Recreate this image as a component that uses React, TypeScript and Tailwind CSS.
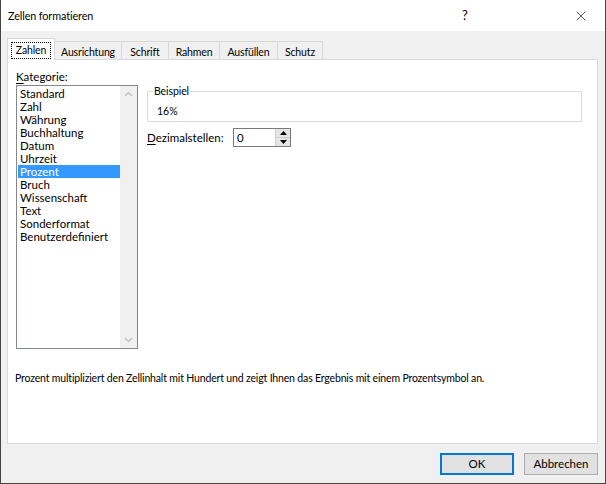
import React from 'react';
import { X } from 'lucide-react';

const categories = [
  'Standard',
  'Zahl',
  'Währung',
  'Buchhaltung',
  'Datum',
  'Uhrzeit',
  'Prozent',
  'Bruch',
  'Wissenschaft',
  'Text',
  'Sonderformat',
  'Benutzerdefiniert',
];

const tabs = [
  { label: 'Zahlen', w: 'w-[48px]' },
  { label: 'Ausrichtung', w: 'w-[67px]' },
  { label: 'Schrift', w: 'w-[47px]' },
  { label: 'Rahmen', w: 'w-[51px]' },
  { label: 'Ausfüllen', w: 'w-[58px]' },
  { label: 'Schutz', w: 'w-[45px]' },
];

const App: React.FC = () => {
  const selected = 'Prozent';

  return (
    <div className="w-[606px] h-[484px] flex flex-col border-x border-b border-[#454545] bg-[#f0f0f0] text-[11.5px] text-black font-['Lato','Liberation_Sans',sans-serif] overflow-hidden">
      {/* Title bar */}
      <div className="h-[31px] bg-white flex items-center shrink-0">
        <span className="pl-[7px] flex-1 leading-[16px] text-[10.8px] tracking-[-0.1px]">Zellen formatieren</span>
        <span className="w-[46px] text-center text-[13px]">?</span>
        <span className="w-[46px] flex justify-center ml-[70px] mr-[1px]">
          <X size={16} strokeWidth={1} />
        </span>
      </div>

      {/* Body */}
      <div className="flex-1 flex flex-col px-[6px] pt-[7px]">
        {/* Tabs */}
        <div className="flex items-end h-[22px] -mb-px relative z-10 text-[10.5px] tracking-[-0.15px]">
          {tabs.map((t, i) =>
            i === 0 ? (
              <div
                key={t.label}
                className={`${t.w} h-[22px] bg-white border-x border-t border-[#d9d9d9] flex justify-center pt-[3px]`}
              >
                <span className="h-[17px] px-[4px] border border-dotted border-black leading-[15px]">{t.label}</span>
              </div>
            ) : (
              <div
                key={t.label}
                className={`${t.w} h-[19px] border-t border-r border-[#d9d9d9] flex items-center justify-center leading-[16px] pt-[2px]`}
              >
                {t.label}
              </div>
            )
          )}
        </div>

        {/* Panel */}
        <div className="w-[591px] h-[385px] bg-white border border-[#d9d9d9] px-[8px] pt-[8px]">
          <div className="flex">
            <div className="w-[122px] shrink-0">
              <div className="h-[17px] leading-[17px]">
                <span className="underline underline-offset-2">K</span>ategorie:
              </div>
              <div className="h-[264px] border border-[#828790] flex">
                <div className="flex-1 pt-[1px] pl-[1px]">
                  {categories.map((c) => (
                    <div
                      key={c}
                      className={`h-[13px] leading-[13px] pl-[2px] whitespace-nowrap ${
                        c === selected ? 'bg-[#3399ff] text-white' : ''
                      }`}
                    >
                      {c}
                    </div>
                  ))}
                </div>
                <div className="w-[17px] bg-[#f0f0f0] flex flex-col justify-between items-center py-[5px]">
                  <svg width="9" height="6" viewBox="0 0 9 6">
                    <path d="M1 5 L4.5 1.5 L8 5" fill="none" stroke="#c2c2c2" strokeWidth="1.5" />
                  </svg>
                  <svg width="9" height="6" viewBox="0 0 9 6">
                    <path d="M1 1 L4.5 4.5 L8 1" fill="none" stroke="#c2c2c2" strokeWidth="1.5" />
                  </svg>
                </div>
              </div>
            </div>

            <div className="flex-1 ml-[9px] pt-[15px] pr-[7px]">
              <fieldset className="border border-[#dcdcdc] pl-[5px] pb-[2px]">
                <legend className="px-[1px] leading-[16px] text-[10.5px] tracking-[-0.1px]">Beispiel</legend>
                <div className="h-[16px] leading-[16px] mt-[4px] pl-[4px] text-[10.5px]">16%</div>
              </fieldset>
              <div className="flex items-center h-[19px] mt-[6px]">
                <span className="w-[86px]">
                  <span className="underline underline-offset-2">D</span>ezimalstellen:
                </span>
                <div className="w-[58px] h-[19px] border border-[#7a7a7a] flex">
                  <span className="flex-1 pl-[3px] leading-[17px]">0</span>
                  <div className="w-[15px] flex flex-col border-l border-[#cfcfcf]">
                    <div className="flex-1 bg-[#e5e5e5] border-b border-[#cfcfcf] flex items-center justify-center">
                      <svg width="7" height="4" viewBox="0 0 7 4">
                        <path d="M0 4 L3.5 0 L7 4 Z" fill="#000" />
                      </svg>
                    </div>
                    <div className="flex-1 bg-[#e5e5e5] flex items-center justify-center">
                      <svg width="7" height="4" viewBox="0 0 7 4">
                        <path d="M0 0 L3.5 4 L7 0 Z" fill="#000" />
                      </svg>
                    </div>
                  </div>
                </div>
              </div>
            </div>
          </div>

          <p className="mt-[21px] -ml-px leading-[16px] whitespace-nowrap text-[10.5px] tracking-[-0.16px]">
            Prozent multipliziert den Zellinhalt mit Hundert und zeigt Ihnen das Ergebnis mit einem Prozentsymbol an.
          </p>
        </div>

        {/* Buttons */}
        <div className="flex justify-end gap-[10px] mt-[9px] pr-[1px]">
          <button className="w-[74px] h-[22px] bg-[#e1e1e1] border-2 border-[#0078d7] leading-[16px]">OK</button>
          <button className="w-[74px] h-[22px] bg-[#e1e1e1] border border-[#adadad] leading-[16px]">Abbrechen</button>
        </div>
      </div>
    </div>
  );
};

export default App;
